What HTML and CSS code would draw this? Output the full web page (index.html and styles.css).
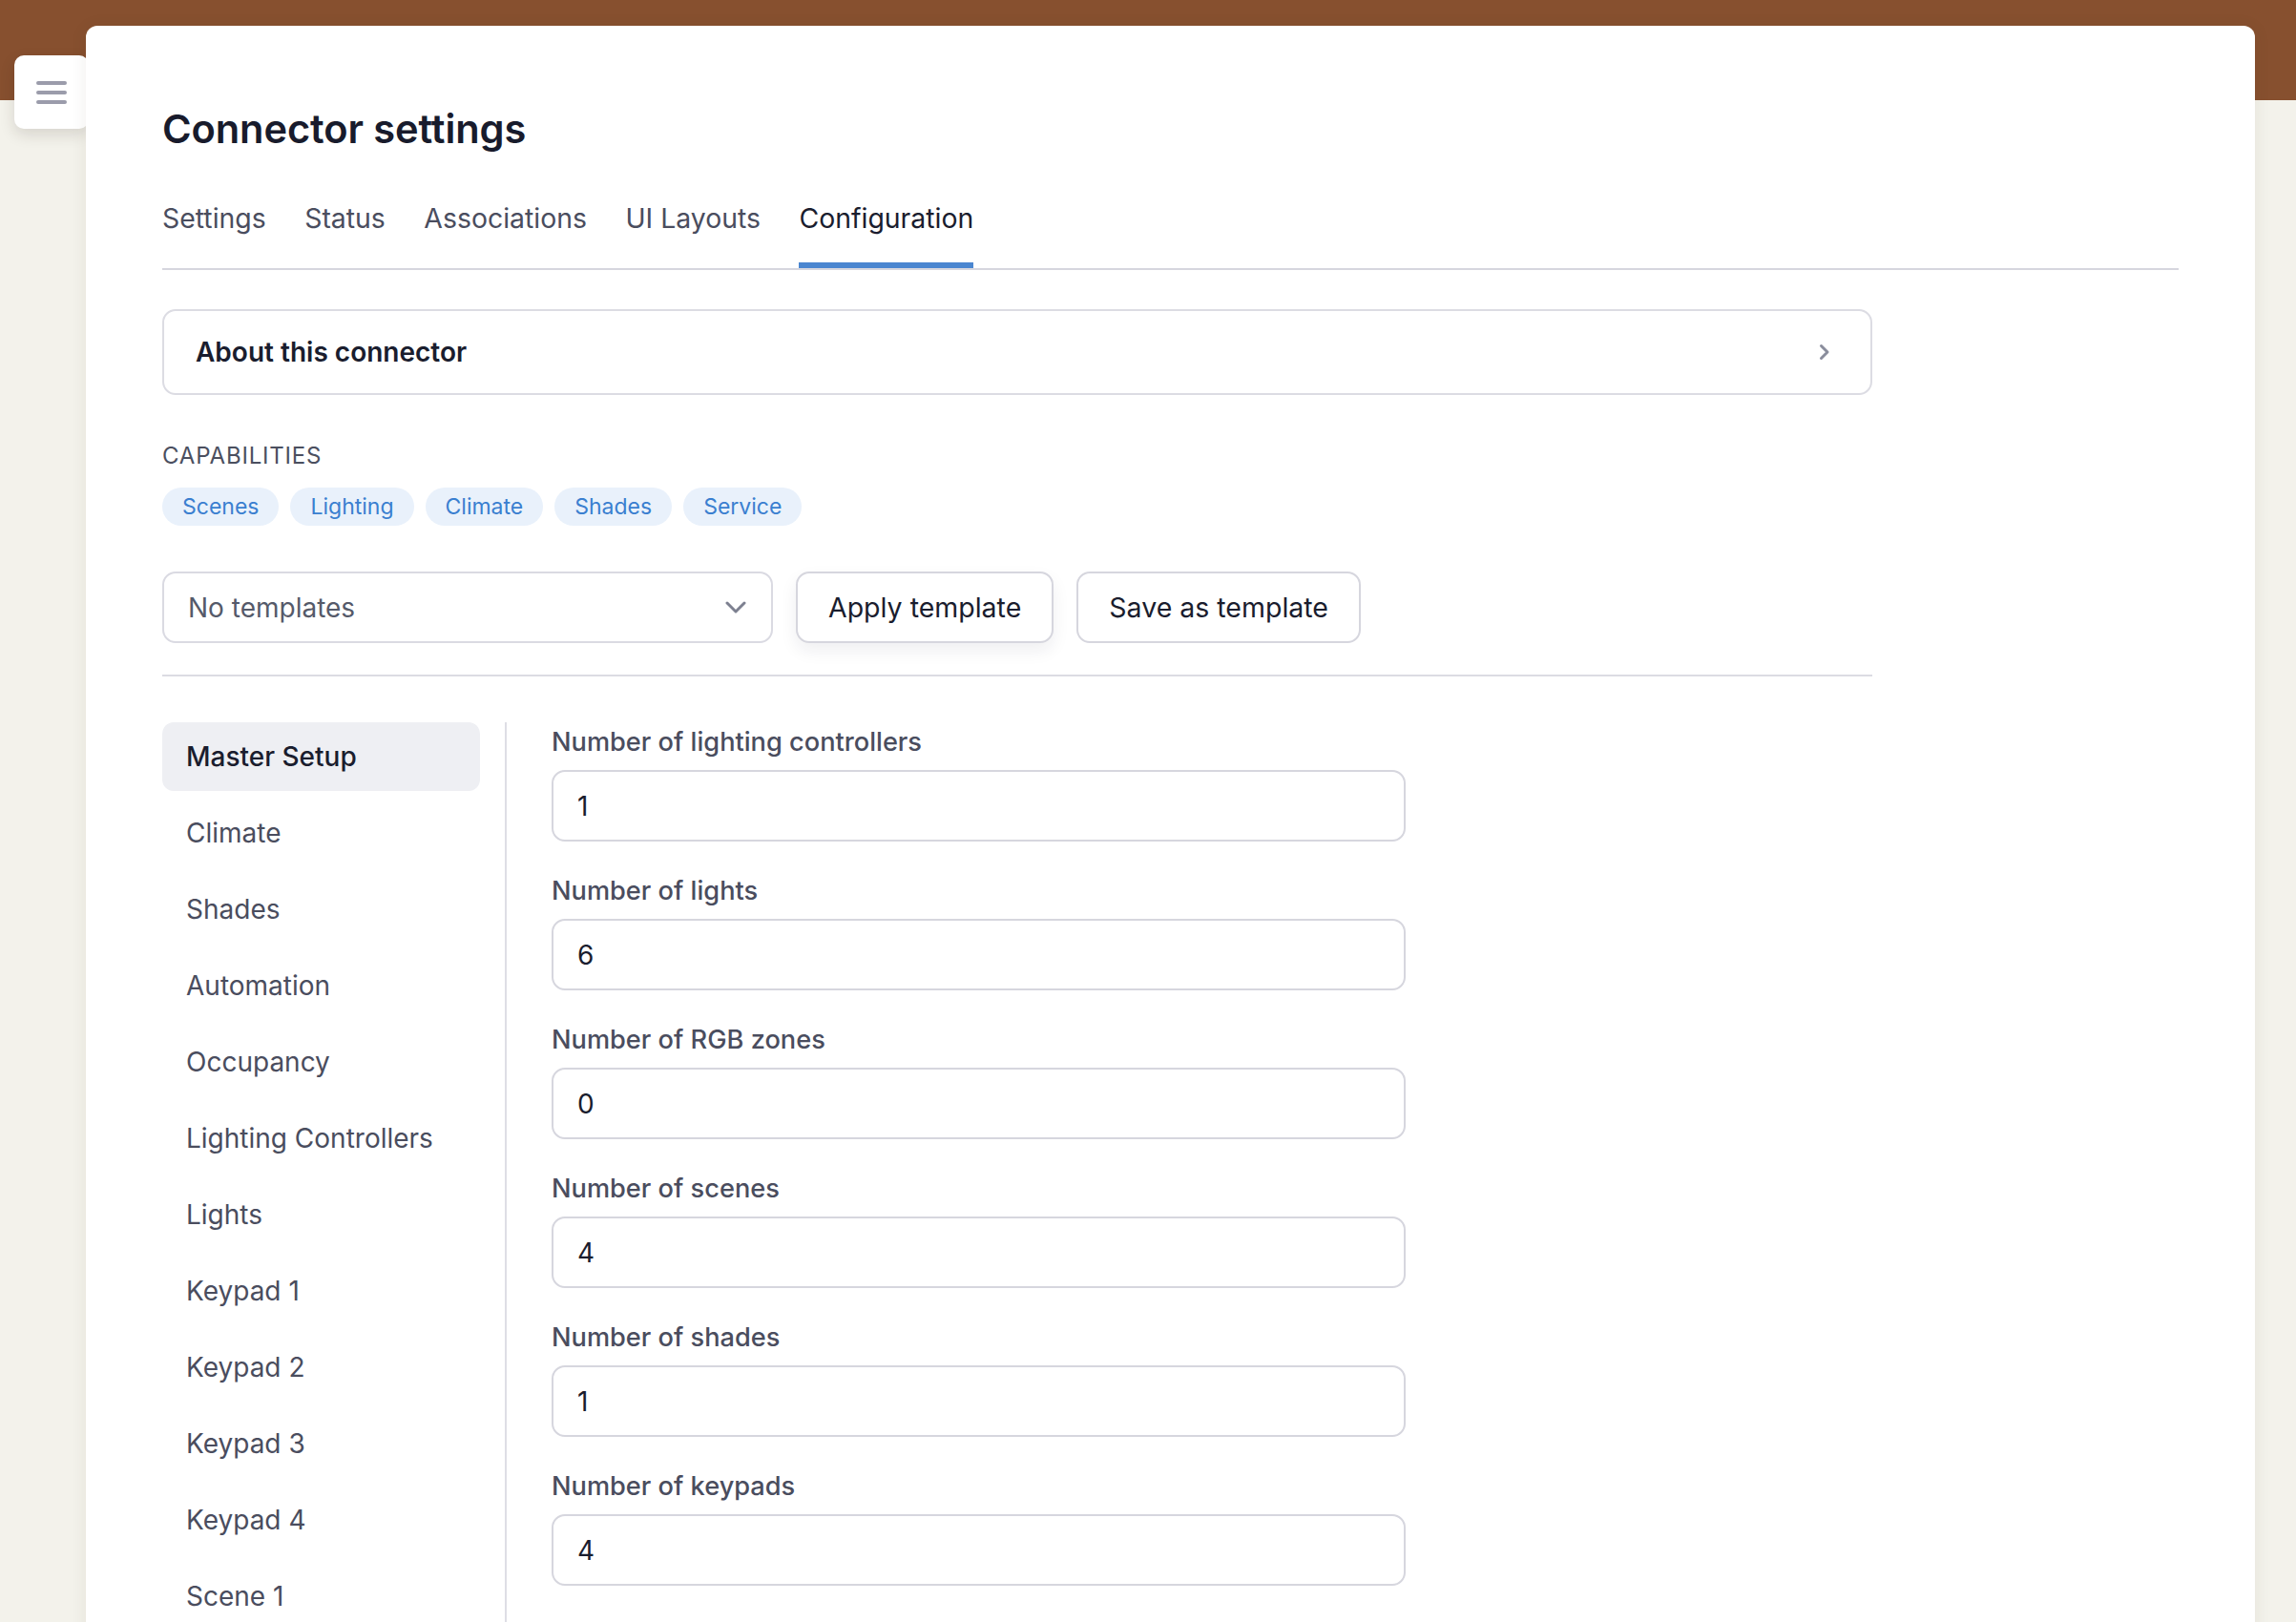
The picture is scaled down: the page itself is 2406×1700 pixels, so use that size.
FILE: index.html
```html
<!DOCTYPE html>
<html lang="en">
<head>
<meta charset="utf-8">
<title>Connector settings</title>
<link rel="stylesheet" href="styles.css">
</head>
<body>
<button class="menu-btn" aria-label="Menu">
  <svg width="32" height="24" viewBox="0 0 32 24"><g stroke="#9b9cab" stroke-width="4" stroke-linecap="round"><line x1="2" y1="2" x2="30" y2="2"/><line x1="2" y1="12" x2="30" y2="12"/><line x1="2" y1="22" x2="30" y2="22"/></g></svg>
</button>
<main class="card">
  <h1 class="title">Connector settings</h1>
  <nav class="tabs">
    <a class="tab">Settings</a>
    <a class="tab">Status</a>
    <a class="tab">Associations</a>
    <a class="tab">UI Layouts</a>
    <a class="tab active">Configuration</a>
  </nav>
  <section class="content">
    <div class="about">
      <span>About this connector</span>
      <svg width="12" height="18" viewBox="0 0 12 18"><path d="M2.5 2.5 L9 9 L2.5 15.5" fill="none" stroke="#8a8d9c" stroke-width="3" stroke-linecap="round" stroke-linejoin="round"/></svg>
    </div>
    <div class="cap-label">CAPABILITIES</div>
    <div class="pills">
      <span class="pill">Scenes</span>
      <span class="pill">Lighting</span>
      <span class="pill">Climate</span>
      <span class="pill">Shades</span>
      <span class="pill">Service</span>
    </div>
    <div class="template-row">
      <div class="select">
        <span>No templates</span>
        <svg width="22" height="13" viewBox="0 0 22 13"><path d="M2 2 L11 11 L20 2" fill="none" stroke="#7d8090" stroke-width="3" stroke-linecap="round" stroke-linejoin="round"/></svg>
      </div>
      <button class="btn btn-shadow">Apply template</button>
      <button class="btn">Save as template</button>
    </div>
    <div class="config">
      <ul class="side">
        <li class="side-item active">Master Setup</li>
        <li class="side-item">Climate</li>
        <li class="side-item">Shades</li>
        <li class="side-item">Automation</li>
        <li class="side-item">Occupancy</li>
        <li class="side-item">Lighting Controllers</li>
        <li class="side-item">Lights</li>
        <li class="side-item">Keypad 1</li>
        <li class="side-item">Keypad 2</li>
        <li class="side-item">Keypad 3</li>
        <li class="side-item">Keypad 4</li>
        <li class="side-item">Scene 1</li>
      </ul>
      <div class="sep"></div>
      <form class="fields">
        <label class="field"><span class="label">Number of lighting controllers</span><span class="input">1</span></label>
        <label class="field"><span class="label">Number of lights</span><span class="input">6</span></label>
        <label class="field"><span class="label">Number of RGB zones</span><span class="input">0</span></label>
        <label class="field"><span class="label">Number of scenes</span><span class="input">4</span></label>
        <label class="field"><span class="label">Number of shades</span><span class="input">1</span></label>
        <label class="field"><span class="label">Number of keypads</span><span class="input">4</span></label>
      </form>
    </div>
  </section>
</main>
</body>
</html>
```
FILE: styles.css
```css
* { box-sizing: border-box; }
html, body { height: 100%; }
body {
  margin: 0;
  font-family: Inter, "Noto Sans", sans-serif;
  background: linear-gradient(#87502f 0, #87502f 105px, #f3f2eb 105px);
  color: #1a1d2e;
  overflow: hidden;
}
.menu-btn {
  position: absolute;
  left: 15px;
  top: 58px;
  width: 78px;
  height: 77px;
  border: none;
  border-radius: 10px;
  background: #fff;
  box-shadow: 0 6px 16px rgba(40, 30, 20, 0.14);
  display: flex;
  align-items: center;
  justify-content: center;
  padding: 0;
  z-index: 1;
}
.card {
  position: relative;
  z-index: 2;
  margin: 27px 43px 0 90px;
  min-height: 1700px;
  background: #fff;
  border-radius: 12px 12px 0 0;
  box-shadow: 0 2px 18px rgba(60, 50, 30, 0.08);
  padding: 84px 80px 0 80px;
}
.title {
  margin: 0;
  font-size: 41.6px;
  line-height: 49px;
  font-weight: 600;
  color: #181b2c;
  letter-spacing: -0.1px;
}
.tabs {
  margin-top: 48px;
  display: flex;
  gap: 40.5px;
  border-bottom: 2px solid #d6d6de;
}
.tab {
  font-size: 28.4px;
  line-height: 40px;
  padding-top: 1px;
  padding-bottom: 26px;
  border-bottom: 6px solid transparent;
  color: #4a4d5e;
}
.tab.active {
  color: #1a1d2e;
  border-bottom-color: #4a86d0;
}
.content {
  width: 1792px;
}
.about {
  margin-top: 41px;
  height: 90px;
  border: 2px solid #dcdce3;
  border-radius: 14px;
  display: flex;
  align-items: center;
  justify-content: space-between;
  padding: 0 42px 0 33px;
  font-size: 28px;
  font-weight: 600;
  color: #1a1d2e;
}
.cap-label {
  margin-top: 49px;
  font-size: 24px;
  line-height: 30px;
  letter-spacing: 0.8px;
  color: #4b4f5f;
}
.pills {
  margin-top: 18px;
  display: flex;
  gap: 12px;
}
.pill {
  height: 40px;
  line-height: 40px;
  padding: 0 21px;
  border-radius: 20px;
  background: #e9f1fb;
  color: #3a7fd0;
  font-size: 23px;
}
.template-row {
  margin-top: 48px;
  display: flex;
  gap: 24px;
  padding-bottom: 33px;
  border-bottom: 2px solid #dcdce3;
}
.select {
  width: 640px;
  height: 75px;
  border: 2px solid #dadae2;
  border-radius: 14px;
  display: flex;
  align-items: center;
  justify-content: space-between;
  padding: 0 26px 0 25px;
  font-size: 28px;
  color: #555a6a;
}
.btn {
  height: 75px;
  border: 2px solid #d6d6de;
  border-radius: 14px;
  background: #fff;
  font-family: inherit;
  font-size: 28.5px;
  color: #1a1d2e;
  padding: 0 32px;
}
.btn-shadow {
  box-shadow: 0 8px 18px rgba(30, 30, 50, 0.07);
}
.config {
  margin-top: 48px;
  display: flex;
}
.side {
  list-style: none;
  margin: 0;
  padding: 0;
  width: 333px;
  display: flex;
  flex-direction: column;
  gap: 8px;
}
.side-item {
  height: 72px;
  line-height: 72px;
  padding-left: 25px;
  border-radius: 12px;
  font-size: 28px;
  color: #4a4d5e;
}
.side-item.active {
  background: #eeeff3;
  color: #1a1d2e;
  font-weight: 500;
}
.sep {
  width: 2px;
  margin-left: 26px;
  background: #dedee5;
  min-height: 1000px;
}
.fields {
  margin-left: 47px;
  width: 895px;
  display: flex;
  flex-direction: column;
  gap: 31px;
}
.field {
  display: flex;
  flex-direction: column;
  gap: 9px;
}
.label {
  font-size: 27.2px;
  line-height: 40px;
  padding-top: 1px;
  font-weight: 500;
  color: #4a4d5e;
}
.input {
  height: 75px;
  border: 2px solid #d6d6de;
  border-radius: 14px;
  display: flex;
  align-items: center;
  padding-left: 25px;
  font-size: 28px;
  color: #1a1d2e;
}
```
